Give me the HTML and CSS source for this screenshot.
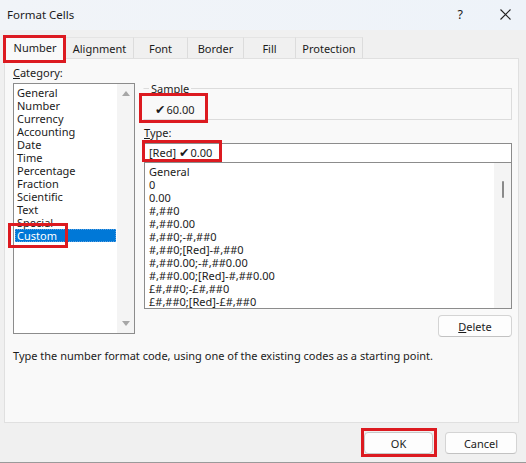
FILE: index.html
```html
<!DOCTYPE html>
<html lang="en">
<head>
  <meta charset="UTF-8" />
  <title>Format Cells</title>
  <link rel="stylesheet" href="styles.css">
</head>
<body>
  <div class="window">
    <div class="titlebar">
      <span class="title">Format Cells</span>
      <span class="help">?</span>
      <span class="close">
        <svg width="11" height="11" viewBox="0 0 11 11"><path d="M0.5 0.5L10.5 10.5M10.5 0.5L0.5 10.5" stroke="#222" stroke-width="1.1" fill="none"/></svg>
      </span>
    </div>

    <div class="tabs">
      <div class="tab active mark mark-tab">Number</div>
      <div class="tab">Alignment</div>
      <div class="tab">Font</div>
      <div class="tab">Border</div>
      <div class="tab">Fill</div>
      <div class="tab last">Protection</div>
    </div>

    <div class="panel">
      <div class="cols">
        <!-- left: category -->
        <div class="left">
          <div class="label"><u>C</u>ategory:</div>
          <div class="listbox cat-list">
            <ul class="items">
              <li>General</li>
              <li>Number</li>
              <li>Currency</li>
              <li>Accounting</li>
              <li>Date</li>
              <li>Time</li>
              <li>Percentage</li>
              <li>Fraction</li>
              <li>Scientific</li>
              <li>Text</li>
              <li>Special</li>
              <li class="selected mark mark-custom">Custom</li>
            </ul>
            <div class="arrows">
              <span class="arrow up"></span>
              <span class="arrow down"></span>
            </div>
          </div>
        </div>

        <!-- right: sample + type -->
        <div class="right">
          <div class="mark mark-sample">
            <fieldset class="sample">
              <legend>Sample</legend>
              <div class="sample-val"><span class="tick">✔</span>60.00</div>
            </fieldset>
          </div>

          <div class="label type-label"><u>T</u>ype:</div>
          <div class="type-input mark mark-input">[Red] <span class="tick">✔</span>0.00</div>

          <div class="listbox type-list">
            <ul class="items">
              <li>General</li>
              <li>0</li>
              <li>0.00</li>
              <li>#,##0</li>
              <li>#,##0.00</li>
              <li>#,##0;-#,##0</li>
              <li>#,##0;[Red]-#,##0</li>
              <li>#,##0.00;-#,##0.00</li>
              <li>#,##0.00;[Red]-#,##0.00</li>
              <li>£#,##0;-£#,##0</li>
              <li>£#,##0;[Red]-£#,##0</li>
            </ul>
            <div class="thin-scroll"><span class="thumb"></span></div>
          </div>

          <div class="btn-row">
            <button class="btn"><u>D</u>elete</button>
          </div>
        </div>
      </div>

      <p class="hint">Type the number format code, using one of the existing codes as a starting point.</p>
    </div>

    <div class="footer">
      <button class="btn btn-ok mark mark-ok">OK</button>
      <button class="btn btn-cancel">Cancel</button>
    </div>
  </div>
</body>
</html>
```

FILE: styles.css
```css
* {
  box-sizing: border-box;
}

body {
  margin: 0;
  background: #f0f0f0;
  font-family: "Noto Sans", "Open Sans", sans-serif;
  font-size: 11px;
  color: #1b1b1b;
}

.window {
  width: 526px;
  height: 463px;
  background: #f0f0f0;
  border-bottom: 1px solid #9a9a9a;
  display: flex;
  flex-direction: column;
}

.titlebar {
  height: 30px;
  display: flex;
  align-items: center;
  padding: 0 15px 2px 7px;
  background: linear-gradient(90deg, #f1f4f8, #eef3f9);
  font-size: 11.5px;
}

.title {
  flex: 1;
}

.help {
  margin-right: 37px;
  font-size: 12.5px;
}

.close {
  display: flex;
}

/* tabs */
.tabs {
  display: flex;
  align-items: flex-end;
  height: 28px;
  padding-left: 4px;
}

.tab {
  height: 21px;
  display: flex;
  align-items: center;
  justify-content: center;
  border-left: 1px solid #dcdcdc;
  border-top: 1px solid #e4e4e4;
  background: #f0f0f0;
}

.tab:nth-child(1) { width: 62px; }
.tab:nth-child(2) { width: 67px; }
.tab:nth-child(3) { width: 54px; }
.tab:nth-child(4) { width: 56px; }
.tab:nth-child(5) { width: 52px; }
.tab:nth-child(6) { width: 68px; }

.tab.last {
  border-right: 1px solid #dcdcdc;
}

.tab.active {
  height: 24px;
  background: #f9f9f9;
  border: 1px solid #e0e0e0;
  border-bottom: none;
  margin-bottom: -1px;
  z-index: 1;
}

.tab.active + .tab {
  border-left: none;
}

/* panel */
.panel {
  margin: 0 7px 0 4px;
  height: 365px;
  background: #f9f9f9;
  border: 1px solid #e0e0e0;
  padding: 7px 6px 0 8px;
}

.cols {
  display: flex;
  gap: 9px;
}

.left {
  width: 122px;
}

.label {
  line-height: 14px;
  height: 17px;
}

.listbox {
  background: #fff;
  border: 1px solid #8c8c8c;
  display: flex;
}

.items {
  list-style: none;
  margin: 0;
  padding: 2px 1px;
  flex: 1;
}

.items li {
  height: 13px;
  line-height: 13px;
  white-space: nowrap;
}

.cat-list {
  height: 251px;
}

.cat-list .items li {
  padding-left: 2px;
}

.cat-list .items li.selected {
  background: #0078d7;
  color: #fff;
  outline: 1px dotted #5aa0e0;
  outline-offset: -1px;
}

.arrows {
  width: 17px;
  background: #f4f4f4;
  display: flex;
  flex-direction: column;
  justify-content: space-between;
  align-items: center;
  padding: 7px 0 7px;
}

.arrow {
  width: 0;
  height: 0;
  border-left: 4px solid transparent;
  border-right: 4px solid transparent;
}

.arrow.up {
  border-bottom: 5px solid #a6a6a6;
}

.arrow.down {
  border-top: 5px solid #a6a6a6;
}

.right {
  width: 368px;
  padding-top: 16px;
}

.sample {
  margin: 0 0 0 -1px;
  padding: 0 0 0 11px;
  border: 1px solid #dcdcdc;
  border-left-color: transparent;
  height: 38px;
}

.sample legend {
  padding: 0 2px;
  margin-left: -6px;
  line-height: 13px;
}

.sample-val {
  line-height: 18px;
  margin-top: 6px;
}

.tick {
  font-family: "DejaVu Sans", sans-serif;
  font-size: 12.5px;
  margin-right: 1px;
}

.type-label {
  margin-top: 6px;
  height: 14px;
}

.type-input {
  height: 20px;
  border: 1px solid #8c8c8c;
  background: #fff;
  padding: 0 4px;
  line-height: 18px;
  margin-top: 3px;
}

.type-list {
  height: 146px;
  border-top: none;
}

.type-list .items {
  padding: 2px 4px;
}

.thin-scroll {
  width: 17px;
  background: #f4f4f4;
  display: flex;
  justify-content: center;
  padding-top: 18px;
}

.thumb {
  width: 2px;
  height: 17px;
  border-radius: 1px;
  background: #8a8a8a;
}

.btn-row {
  display: flex;
  justify-content: flex-end;
  margin-top: 6px;
}

.btn {
  font-family: inherit;
  font-size: 11px;
  color: #1b1b1b;
  background: #fdfdfd;
  border: 1px solid #d4d4d4;
  border-bottom-color: #c2c2c2;
  border-radius: 4px;
  height: 22px;
  width: 74px;
  padding: 0;
}

.hint {
  margin: 12px 0 0;
  line-height: 14px;
}

.footer {
  display: flex;
  justify-content: flex-end;
  gap: 12px;
  padding: 9px 9px 0 0;
}

.btn-ok {
  width: 69px;
  border: 1px solid #c8c8c8;
}

.btn-cancel {
  width: 72px;
}

/* red highlight marks drawn over the screenshot */
.mark {
  position: relative;
}

.mark::after {
  content: "";
  box-sizing: border-box;
  position: absolute;
  border: 3px solid #dc1a20;
  pointer-events: none;
}

.mark-tab::after {
  left: -2px;
  top: -1px;
  width: 63px;
  height: 28px;
}

.mark-sample::after {
  left: -5px;
  top: 11px;
  width: 69px;
  height: 30px;
}

.mark-input::after {
  left: -3px;
  top: -4px;
  width: 80px;
  height: 22px;
}

.mark-custom::after {
  left: -7px;
  top: -6px;
  width: 60px;
  height: 25px;
}

.mark-ok::after {
  left: -4px;
  top: -5px;
  width: 76px;
  height: 29px;
}
```
